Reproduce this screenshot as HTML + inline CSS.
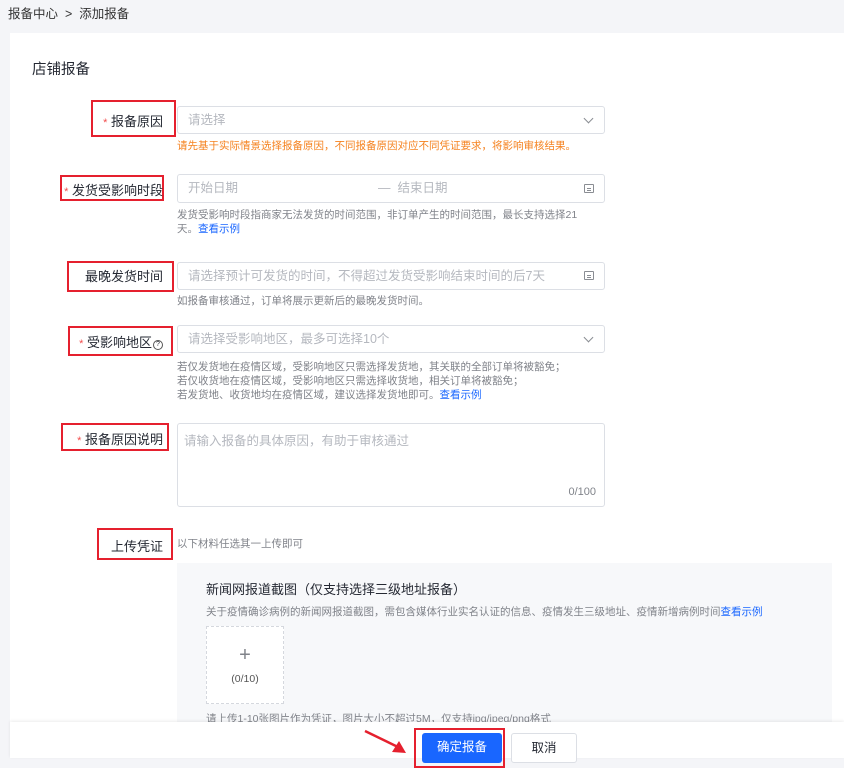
<!DOCTYPE html><html><head><meta charset="utf-8"><style>
*{margin:0;padding:0;box-sizing:border-box}
body{width:844px;height:758px;overflow:hidden;background:#f4f5f8;font-family:"Liberation Sans","Noto Sans CJK SC",sans-serif;position:relative;color:#252933}
.a{position:absolute;white-space:nowrap}
.card{position:absolute;left:10px;top:33px;right:0;height:725px;background:#fff}
.rb{position:absolute;border:2px solid #e5202e}
.lb{font-size:13px;color:#252933;right:681px;text-align:right}
.st{color:#f24c4c;font-size:11px}
.in{position:absolute;border:1px solid #dcdfe5;border-radius:3px;background:#fff;font-size:12.5px;color:#b5b8bf;padding-left:10px}
.h{font-size:10.5px;color:#80838a;line-height:14px}
.lk{color:#1966ff}
.ic{position:absolute;right:10px;top:50%;margin-top:-5px;width:10px;height:9px;border:1px solid #8a8d93;border-radius:1px}
.ic:after{content:"";position:absolute;left:2px;right:2px;top:3px;height:1px;background:#8a8d93;box-shadow:0 2px 0 #8a8d93}
.chev{position:absolute;right:12px;top:50%;margin-top:-5px;width:7px;height:7px;border-right:1px solid #8a8d93;border-bottom:1px solid #8a8d93;transform:rotate(45deg)}
</style></head><body>
<div class="a" style="left:8px;top:3px;font-size:12.5px;color:#333">报备中心 &nbsp;&gt;&nbsp; 添加报备</div>
<div class="card"></div>
<div class="a" style="left:32px;top:58px;font-size:14.5px">店铺报备</div>

<div class="rb" style="left:91px;top:100px;width:85px;height:37px"></div>
<div class="a lb" style="top:111px"><span class="st">*</span> 报备原因</div>
<div class="in" style="left:177px;top:106px;width:428px;height:28px;line-height:26px">请选择<span class="chev"></span></div>
<div class="a h" style="left:177px;top:139px;color:#f5821f">请先基于实际情景选择报备原因，不同报备原因对应不同凭证要求，将影响审核结果。</div>

<div class="rb" style="left:60px;top:175px;width:104px;height:26px"></div>
<div class="a lb" style="top:180px"><span class="st">*</span> 发货受影响时段</div>
<div class="in" style="left:177px;top:174px;width:428px;height:29px;line-height:27px">开始日期<span style="position:absolute;left:200px">—&nbsp; 结束日期</span><span class="ic"></span></div>
<div class="a h" style="left:177px;top:208px">发货受影响时段指商家无法发货的时间范围，非订单产生的时间范围，最长支持选择21<br>天。<span class="lk">查看示例</span></div>

<div class="rb" style="left:67px;top:261px;width:107px;height:31px"></div>
<div class="a lb" style="top:266px">最晚发货时间</div>
<div class="in" style="left:177px;top:262px;width:428px;height:28px;line-height:26px">请选择预计可发货的时间，不得超过发货受影响结束时间的后7天<span class="ic"></span></div>
<div class="a h" style="left:177px;top:294px">如报备审核通过，订单将展示更新后的最晚发货时间。</div>

<div class="rb" style="left:68px;top:326px;width:105px;height:30px"></div>
<div class="a lb" style="top:332px"><span class="st">*</span> 受影响地区<span style="display:inline-block;width:10px;height:10px;border:1px solid #555;border-radius:50%;font-size:7px;line-height:8px;text-align:center;vertical-align:1px;margin-left:1px">?</span></div>
<div class="in" style="left:177px;top:325px;width:428px;height:28px;line-height:26px">请选择受影响地区，最多可选择10个<span class="chev"></span></div>
<div class="a h" style="left:177px;top:360px">若仅发货地在疫情区域，受影响地区只需选择发货地，其关联的全部订单将被豁免；<br>若仅收货地在疫情区域，受影响地区只需选择收货地，相关订单将被豁免；<br>若发货地、收货地均在疫情区域，建议选择发货地即可。<span class="lk">查看示例</span></div>

<div class="rb" style="left:61px;top:423px;width:108px;height:28px"></div>
<div class="a lb" style="top:429px"><span class="st">*</span> 报备原因说明</div>
<div class="in" style="left:177px;top:423px;width:428px;height:84px;line-height:34px;padding-left:6px">请输入报备的具体原因，有助于审核通过<span class="a" style="right:8px;bottom:8px;line-height:12px;font-size:11px;color:#80838a">0/100</span></div>

<div class="rb" style="left:97px;top:528px;width:76px;height:32px"></div>
<div class="a lb" style="top:536px">上传凭证</div>
<div class="a h" style="left:177px;top:537px">以下材料任选其一上传即可</div>

<div class="a" style="left:177px;top:563px;width:655px;height:160px;background:#f7f8fa"></div>
<div class="a" style="left:206px;top:579px;font-size:13px">新闻网报道截图（仅支持选择三级地址报备）</div>
<div class="a h" style="left:206px;top:605px">关于疫情确诊病例的新闻网报道截图，需包含媒体行业实名认证的信息、疫情发生三级地址、疫情新增病例时间<span class="lk">查看示例</span></div>
<div class="a" style="left:206px;top:626px;width:78px;height:78px;border:1px dashed #d5d8de;background:#fff;text-align:center;color:#80838a"><div style="font-size:20px;margin-top:18px;line-height:20px;font-weight:300">+</div><div style="font-size:10.5px;margin-top:8px;color:#555">(0/10)</div></div>
<div class="a h" style="left:206px;top:712px">请上传1-10张图片作为凭证，图片大小不超过5M，仅支持jpg/jpeg/png格式</div>

<div class="a" style="left:10px;top:722px;right:0;height:36px;background:#fff;box-shadow:0 -1px 3px rgba(0,0,0,.08)"></div>
<svg class="a" style="left:362px;top:728px" width="50" height="28"><path d="M3 3 L38 20" stroke="#e5202e" stroke-width="2.5"/><path d="M30 24 L44 25 L37 13 Z" fill="#e5202e"/></svg>
<div class="rb" style="left:414px;top:728px;width:91px;height:40px"></div>
<div class="a" style="left:422px;top:733px;width:80px;height:30px;background:#1966ff;border-radius:3px;color:#fff;font-size:12.5px;text-align:center;line-height:28px">确定报备</div>
<div class="a" style="left:511px;top:733px;width:66px;height:30px;border:1px solid #dcdfe5;border-radius:3px;background:#fff;font-size:12.5px;text-align:center;line-height:28px">取消</div>
</body></html>
